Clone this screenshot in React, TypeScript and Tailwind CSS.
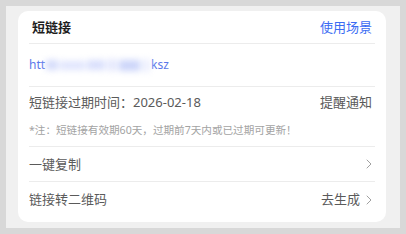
import React from "react";

const Chevron = () => (
  <svg width="6" height="10" viewBox="0 0 6 10" fill="none" className="ml-[6px]">
    <path d="M1 1l4 4-4 4" stroke="#a0a0a0" strokeWidth="1" strokeLinecap="round" strokeLinejoin="round" />
  </svg>
);

export default function App() {
  const font = { fontFamily: '"Noto Sans", "Noto Sans CJK SC", sans-serif' };
  return (
    <div className="w-[406px] h-[234px] bg-[#d8d8d8] p-[6px]" style={font}>
      <div className="w-[394px] h-[222px] bg-[#f0f0f0] pl-[12px] pr-[14px] pt-[5px] pb-[6px]">
        <div className="h-[211px] bg-white rounded-[10px] px-[11px] flex flex-col">
          <div className="h-[33px] flex items-center justify-between border-b border-[#ececec] pl-[3px] pr-[3px]">
            <span className="text-[13px] font-bold text-[#1e1e1e] leading-none">短链接</span>
            <span className="text-[13px] text-[#3b6cf3] leading-none">使用场景</span>
          </div>
          <div className="h-[43px] flex items-center border-b border-[#ececec]">
            <span className="text-[12px] text-[#5a78ea] leading-none">htt</span>
            <div className="relative w-[104px] h-[14px] mx-[1px]">
              <div className="absolute inset-0 flex items-center gap-[2px] blur-[3px]">
                <div className="w-[12px] h-[10px] bg-[#d4dbfb]" />
                <div className="w-[26px] h-[9px] bg-[#e0e5fd]" />
                <div className="w-[18px] h-[10px] bg-[#d9dffc]" />
                <div className="w-[10px] h-[12px] bg-[#e6e9fd]" />
                <div className="w-[22px] h-[11px] bg-[#ccd5fa]" />
                <div className="w-[8px] h-[13px] bg-[#eceffd]" />
              </div>
            </div>
            <span className="text-[12px] text-[#5a78ea] leading-none">ksz</span>
          </div>
          <div className="h-[60px] flex flex-col border-b border-[#ececec]">
            <div className="h-[30px] flex items-center justify-between pr-[3px]">
              <span className="text-[13px] text-[#5a5a5a] leading-none">短链接过期时间：2026-02-18</span>
              <span className="text-[13px] text-[#5a5a5a] leading-none">提醒通知</span>
            </div>
            <div className="h-[26px] flex items-center">
              <span className="text-[10.6px] text-[#a3a3a3] leading-none whitespace-nowrap">*注：短链接有效期60天，过期前7天内或已过期可更新！</span>
            </div>
          </div>
          <div className="h-[35px] flex items-center justify-between border-b border-[#ececec] pr-[3px]">
            <span className="text-[13px] text-[#5a5a5a] leading-none">一键复制</span>
            <Chevron />
          </div>
          <div className="h-[35px] flex items-center justify-between pr-[3px]">
            <span className="text-[13px] text-[#5a5a5a] leading-none">链接转二维码</span>
            <div className="flex items-center">
              <span className="text-[13px] text-[#5a5a5a] leading-none">去生成</span>
              <Chevron />
            </div>
          </div>
        </div>
      </div>
    </div>
  );
}
